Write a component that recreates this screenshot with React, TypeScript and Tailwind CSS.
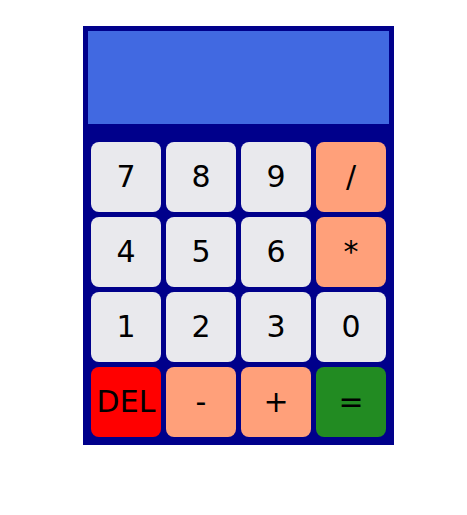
import React from "react";

const keys: { label: string; color: string }[] = [
  { label: "7", color: "bg-[#e9e9ed]" },
  { label: "8", color: "bg-[#e9e9ed]" },
  { label: "9", color: "bg-[#e9e9ed]" },
  { label: "/", color: "bg-[#ffa07a]" },
  { label: "4", color: "bg-[#e9e9ed]" },
  { label: "5", color: "bg-[#e9e9ed]" },
  { label: "6", color: "bg-[#e9e9ed]" },
  { label: "*", color: "bg-[#ffa07a]" },
  { label: "1", color: "bg-[#e9e9ed]" },
  { label: "2", color: "bg-[#e9e9ed]" },
  { label: "3", color: "bg-[#e9e9ed]" },
  { label: "0", color: "bg-[#e9e9ed]" },
  { label: "DEL", color: "bg-[#ff0000]" },
  { label: "-", color: "bg-[#ffa07a]" },
  { label: "+", color: "bg-[#ffa07a]" },
  { label: "=", color: "bg-[#228b22]" },
];

export default function App() {
  return (
    <div className="min-h-[515px] bg-white pt-[26px] pl-[83px]">
      <div className="w-[311px] bg-[#00008b] p-[5px]">
        <div className="h-[93px] bg-[#4169e1]" />
        <div className="mt-[18px] grid grid-cols-4 gap-[5px] px-[3px] pb-[3px]">
          {keys.map((k) => (
            <button
              key={k.label}
              className={`${k.color} flex h-[70px] items-center justify-center rounded-lg text-[30px] leading-none text-black`}
              style={{ fontFamily: "Verdana, 'DejaVu Sans', sans-serif" }}
            >
              {k.label}
            </button>
          ))}
        </div>
      </div>
    </div>
  );
}
